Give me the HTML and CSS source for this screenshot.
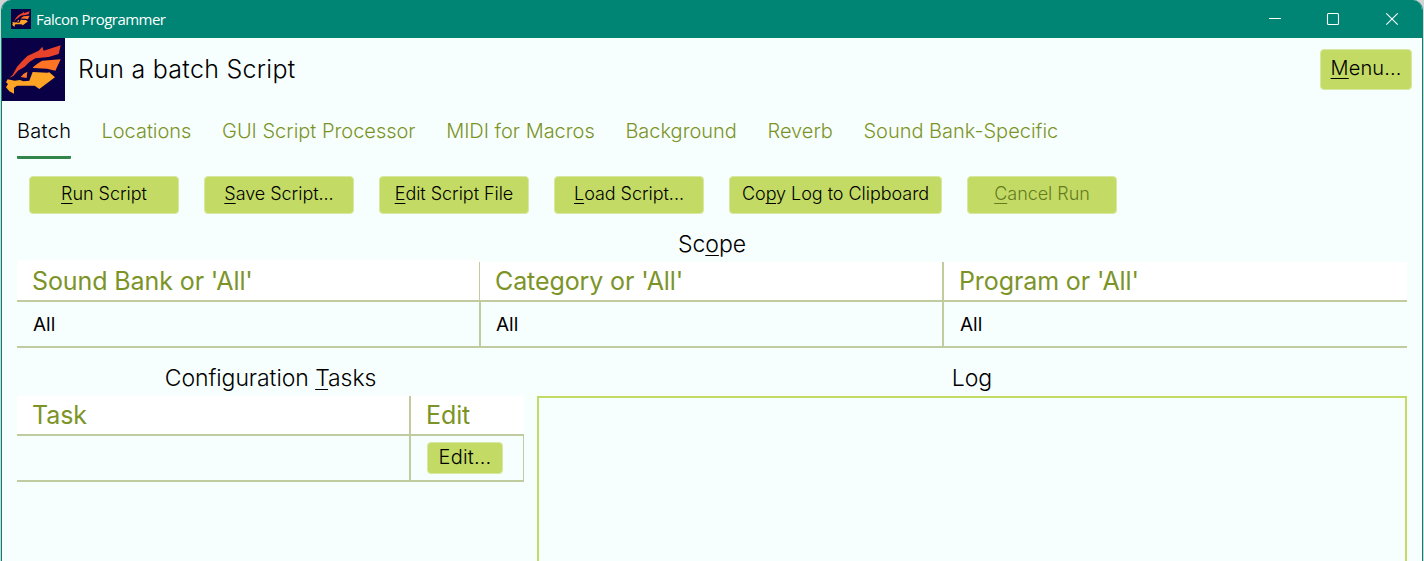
FILE: index.html
```html
<!DOCTYPE html>
<html lang="en">
<head>
<meta charset="utf-8">
<title>Falcon Programmer</title>
<link rel="stylesheet" href="styles.css">
</head>
<body>
<svg width="0" height="0" class="defs">
  <symbol id="falcon" viewBox="0 0 189 189">
    <rect width="189" height="189" fill="#0a0046"/>
    <path fill="#e8432a" d="M22 120L32 110L45 87L58 72L76 54L110 38L121 26L125 38L176 22L170 48L140 57L100 61L82 72L68 86L48 98L34 114Z"/>
    <path fill="#ff7324" d="M93 88L105 78L120 68L176 64L160 98L135 92L93 90ZM56 117L65 107L76 101L74 120Z"/>
    <path fill="#ffa424" d="M17 124L38 128L54 126L64 130L82 128L92 102L135 104L142 103L159 118L137 134L112 153L98 143L45 143L36 149L36 167L22 160L12 148L18 138L12 133Z"/>
  </symbol>
</svg>
<div class="window">
  <header class="titlebar">
    <svg class="app-icon"><use href="#falcon"/></svg>
    <span class="app-name">Falcon Programmer</span>
    <svg class="controls" viewBox="0 0 130 14"><path d="M0 6.500h12M117.300 1.300l11.400 11.400M128.700 1.300l-11.400 11.400"/><rect x="58.500" y="1.500" width="11" height="11" rx="1"/></svg>
  </header>
  <div class="heading">
    <svg class="logo"><use href="#falcon"/></svg>
    <h1 class="title">Run a batch Script</h1>
    <button class="btn menu"><span><u>M</u>enu...</span></button>
  </div>
  <nav class="tabs">
    <a class="tab active">Batch</a><a class="tab">Locations</a><a class="tab">GUI Script Processor</a><a class="tab">MIDI for Macros</a><a class="tab">Background</a><a class="tab">Reverb</a><a class="tab">Sound Bank-Specific</a>
  </nav>
  <div class="actions">
    <button class="btn"><span><u>R</u>un Script</span></button>
    <button class="btn"><span><u>S</u>ave Script...</span></button>
    <button class="btn"><span><u>E</u>dit Script File</span></button>
    <button class="btn"><span><u>L</u>oad Script...</span></button>
    <button class="btn wide"><span>Co<u>p</u>y Log to Clipboard</span></button>
    <button class="btn" disabled><span><u>C</u>ancel Run</span></button>
  </div>
  <section class="scope">
    <h2 class="caption">Sc<u>o</u>pe</h2>
    <div class="grid scope-grid">
      <div class="th thin">Sound Bank or 'All'</div><div class="th">Category or 'All'</div><div class="th">Program or 'All'</div>
      <div class="td">All</div><div class="td">All</div><div class="td">All</div>
    </div>
  </section>
  <div class="panels">
    <section>
      <h2 class="caption">Configuration <u>T</u>asks</h2>
      <div class="grid task-grid">
        <div class="th">Task</div><div class="th">Edit</div>
        <div class="td"></div><div class="td last"><button class="btn edit"><span>Edit...</span></button></div>
      </div>
    </section>
    <section class="log-panel">
      <h2 class="caption">Log</h2>
      <div class="log"></div>
    </section>
  </div>
</div>
</body>
</html>
```
FILE: styles.css
```css
* { box-sizing: border-box; }
body { margin: 0; padding: 0 1px; height: 561px; overflow: hidden; background: #d3d5d5; font-family: Inter, "Liberation Sans", sans-serif; color: #000; }
.defs { display: block; }
.window { height: 561px; border: solid #008575; border-width: 0 1px; border-radius: 10px 10px 0 0; background: #f7fffe; overflow: hidden; }
u { text-decoration-thickness: 1px; text-underline-offset: 3px; text-decoration-skip-ink: none; }
h1, h2 { margin: 0; font-weight: 400; }

.titlebar { height: 38px; display: flex; align-items: center; padding: 0 23px 0 9px; background: #008575; color: #fff; }
.app-icon { width: 20px; height: 20px; }
.app-name { margin-left: 5px; font: 15px/20px "Open Sans", "Noto Sans", sans-serif; letter-spacing: -0.52px; }
.controls { width: 130px; height: 14px; margin-left: auto; fill: none; stroke: #fff; stroke-width: 1.1; }

.heading { height: 63px; display: flex; align-items: center; padding-right: 10px; }
.logo { width: 63px; height: 63px; }
.title { margin: -2px 0 0 13px; font-size: 25px; line-height: 30px; font-weight: 350; letter-spacing: 0.28px; }
.btn { width: 150px; height: 38px; flex: none; padding: 0 0 3px; border: 1px solid #d8e8a0; border-radius: 4px; background: #c3db65; color: #000; font: 350 18px/24px Inter, sans-serif; letter-spacing: -0.04px; white-space: nowrap; }
.btn:disabled { color: #647b1e; }
.menu { width: 92px; height: 41px; margin-left: auto; font-size: 20px; letter-spacing: 0.1px; }

.tabs { height: 75px; display: flex; gap: 30.6px; padding: 18px 15px 0; }
.tab { height: 40px; font-size: 20px; line-height: 24px; font-weight: 300; letter-spacing: -0.01px; color: #7c9427; white-space: nowrap; }
.tab.active { color: #000; letter-spacing: 0.3px; margin-right: -0.4px; border-bottom: 3px solid #32864b; border-radius: 1px; }

.actions { height: 56px; display: flex; gap: 25px; padding-left: 27px; }
.wide { width: 213px; }

.scope { padding: 0 15px; }
.caption { height: 30px; font-size: 23px; line-height: 25px; font-weight: 350; text-align: center; letter-spacing: -0.07px; }
.grid { display: grid; grid-template-rows: 40px 46px; }
.scope-grid { grid-template-columns: 464px 463px 463px; }
.task-grid { grid-template-columns: 394px 113px; }
.th, .td { border: 0 solid #c0cca0; border-bottom-width: 2px; }
.th { padding: 4px 15px 0; background: #fff; color: #7c9427; font-size: 25px; line-height: 30px; font-weight: 400; letter-spacing: -0.1px; }
.td { padding: 11px 16px 0; font-size: 19px; line-height: 24px; font-weight: 400; }
.scope-grid > :nth-child(3n + 2) { padding-left: 14px; }
.scope-grid > .td:nth-child(3n + 2) { padding-left: 15px; }
.scope-grid > :not(:nth-child(3n)), .task-grid > :nth-child(odd) { border-right-width: 2px; }
.scope-grid > .thin { border-right-width: 1px; margin-right: 1px; box-shadow: 1px -2px #fff, 1px 0 #c0cca0; }

.panels { height: 213px; display: grid; grid-template-columns: 507px 870px; gap: 13px; padding: 18px 15px 0; }
.td.last { padding: 6px 16px; border-right-width: 1px; }
.edit { display: block; width: 76px; height: 32px; font-size: 20px; letter-spacing: 0.2px; }
.log-panel { display: flex; flex-direction: column; }
.log { flex: 1; border: 2px solid #c3db65; border-bottom: 0; }
```
